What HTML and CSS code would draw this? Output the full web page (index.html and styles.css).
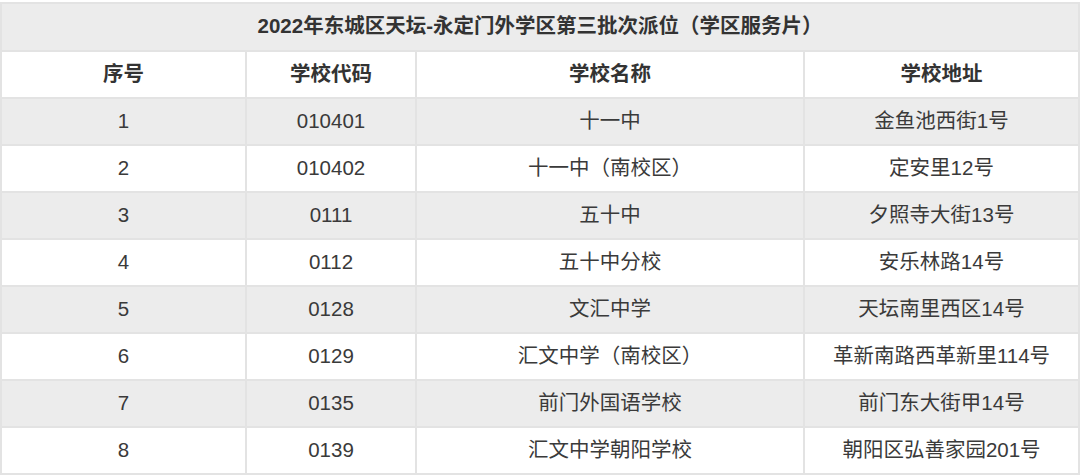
FILE: index.html
```html
<!DOCTYPE html>
<html lang="zh-CN">
<head>
<meta charset="utf-8">
<link rel="stylesheet" href="styles.css">
</head>
<body>
<div class="wrap">
<table class="tbl">
<colgroup>
<col class="c1"><col class="c2"><col class="c3"><col class="c4">
</colgroup>
<tr class="title"><td colspan="4">2022年东城区天坛-永定门外学区第三批次派位（学区服务片）</td></tr>
<tr class="head"><td>序号</td><td>学校代码</td><td>学校名称</td><td>学校地址</td></tr>
<tr class="g"><td>1</td><td>010401</td><td>十一中</td><td>金鱼池西街1号</td></tr>
<tr><td>2</td><td>010402</td><td>十一中（南校区）</td><td>定安里12号</td></tr>
<tr class="g"><td>3</td><td>0111</td><td>五十中</td><td>夕照寺大街13号</td></tr>
<tr><td>4</td><td>0112</td><td>五十中分校</td><td>安乐林路14号</td></tr>
<tr class="g"><td>5</td><td>0128</td><td>文汇中学</td><td>天坛南里西区14号</td></tr>
<tr><td>6</td><td>0129</td><td>汇文中学（南校区）</td><td>革新南路西革新里114号</td></tr>
<tr class="g"><td>7</td><td>0135</td><td>前门外国语学校</td><td>前门东大街甲14号</td></tr>
<tr><td>8</td><td>0139</td><td>汇文中学朝阳学校</td><td>朝阳区弘善家园201号</td></tr>
</table>
</div>
</body>
</html>
```

FILE: styles.css
```css
html, body {
  margin: 0;
  padding: 0;
  background: #ffffff;
}
.wrap {
  padding-top: 2px;
}
.tbl {
  border-collapse: collapse;
  table-layout: fixed;
  width: 1079px;
  font-family: "Liberation Sans", "Noto Sans CJK SC", sans-serif;
  font-size: 20.5px;
  color: #3a3a3a;
}
.c1 { width: 245px; }
.c2 { width: 170px; }
.c3 { width: 388px; }
.c4 { width: 275px; }
.tbl td {
  border: 2px solid #e3e3e3;
  text-align: center;
  vertical-align: middle;
  height: 43px;
  padding: 0 0 2px 0;
  line-height: 24px;
}
.tbl tr.title td {
  background: #ececec;
  font-weight: bold;
  color: #333333;
  height: 44px;
}
.tbl tr.head td {
  font-weight: bold;
  color: #333333;
}
.tbl tr.g td {
  background: #ececec;
}
```
